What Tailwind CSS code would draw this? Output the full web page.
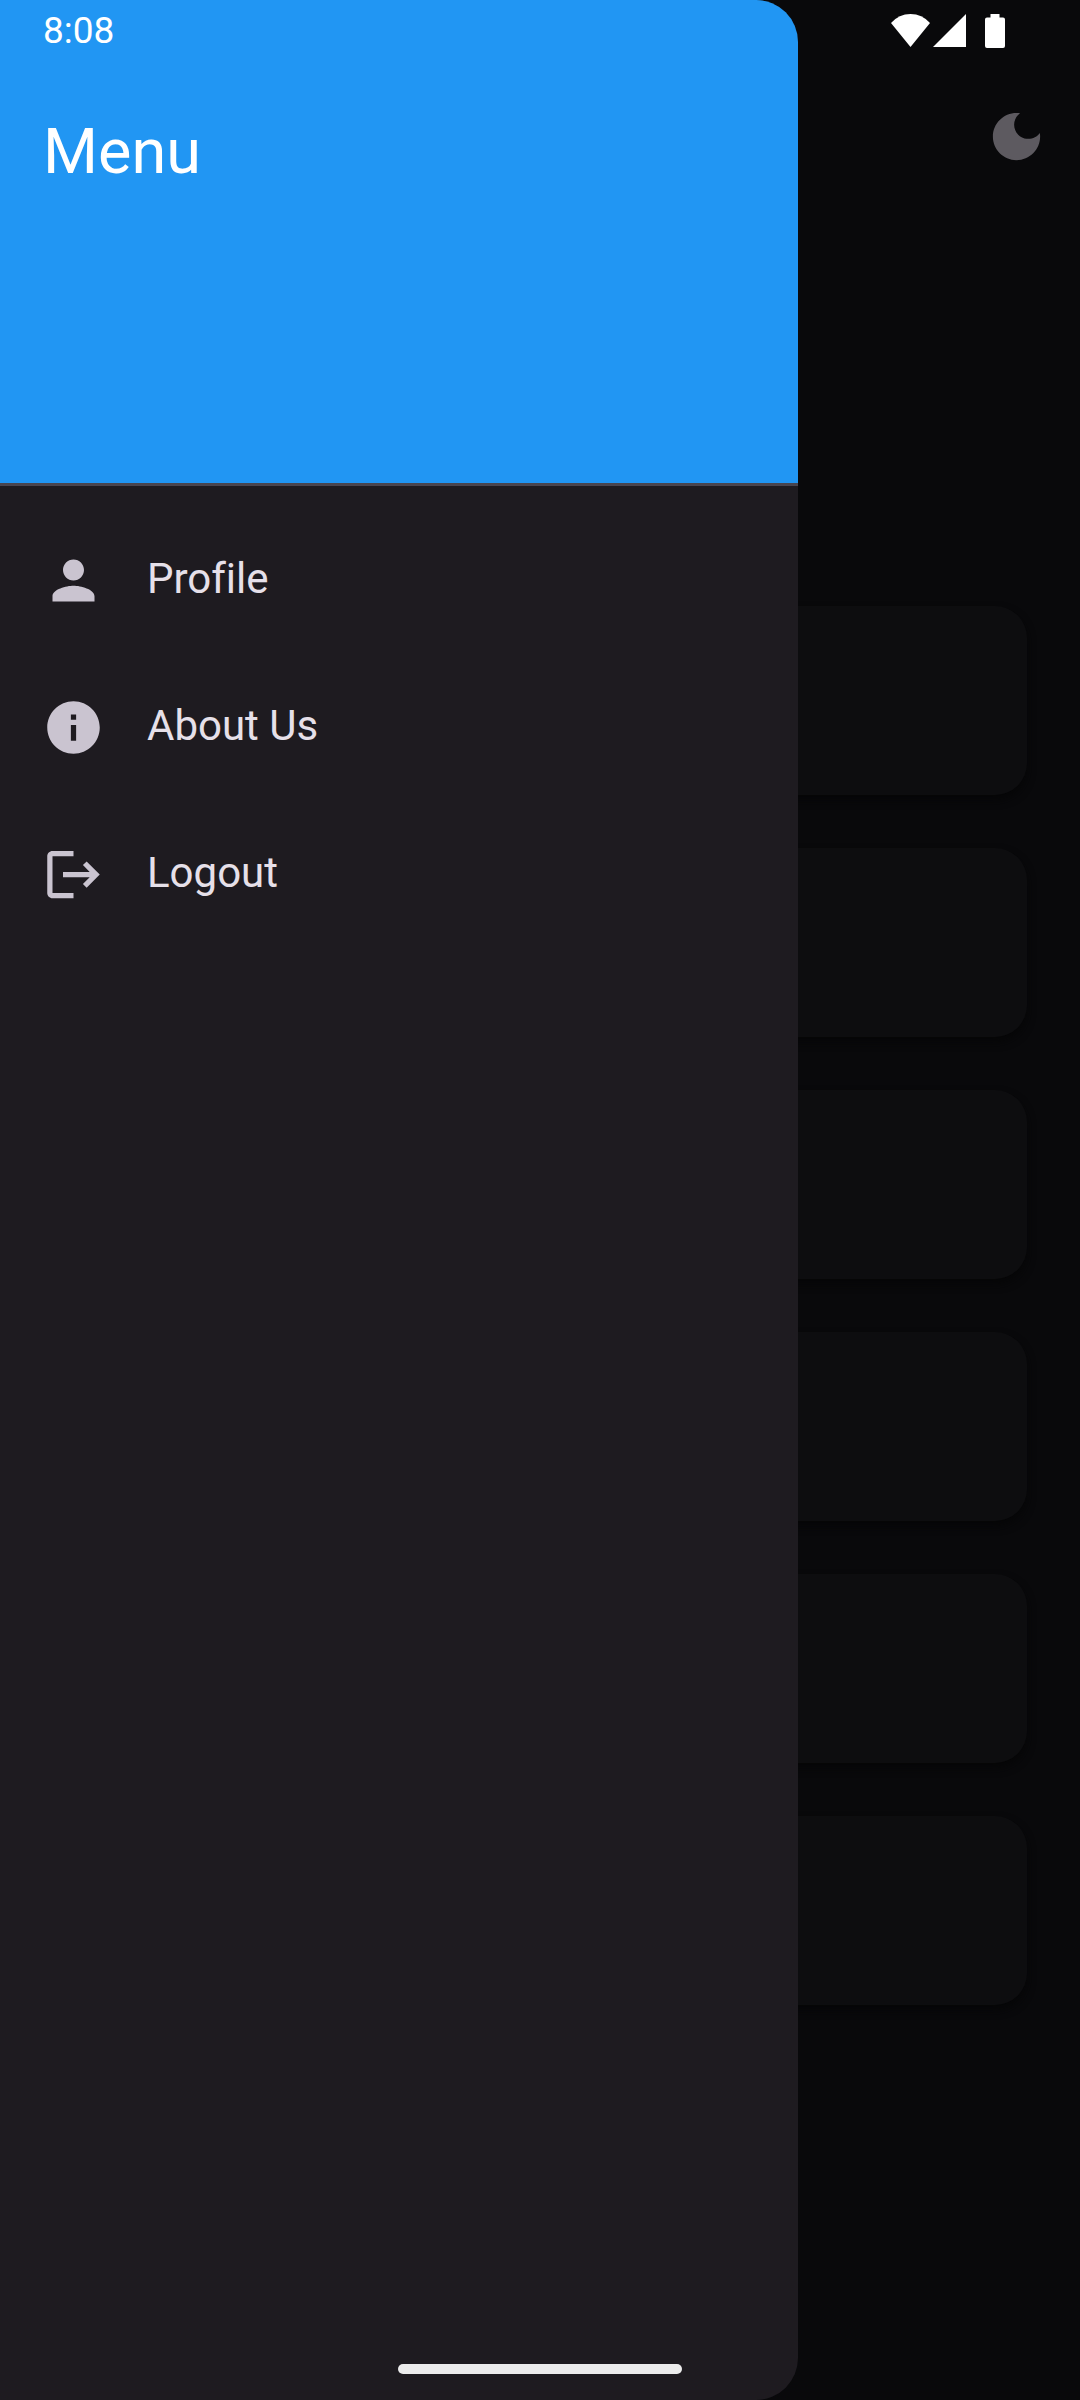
<!DOCTYPE html>
<html lang="en">
<head>
<meta charset="utf-8">
<meta name="viewport" content="width=device-width, initial-scale=1">
<title>Menu</title>
<script src="https://cdn.jsdelivr.net/npm/@tailwindcss/browser@4"></script>
</head>
<body class="bg-[#09090b] font-[Roboto,sans-serif]">
<div class="relative min-h-screen overflow-hidden">

  <!-- Page behind the drawer -->
  <main class="pt-[63px]">
    <div class="flex h-[147px] items-center justify-end px-8">
      <button type="button" aria-label="Dark mode" class="text-[#5d5a60]">
        <svg class="size-[63px]" viewBox="0 0 24 24" fill="currentColor"><path d="M12 3c-4.970 0-9 4.030-9 9s4.030 9 9 9 9-4.030 9-9c0-.46-.04-.92-.1-1.360-.98 1.370-2.580 2.260-4.400 2.260-2.980 0-5.400-2.420-5.400-5.400 0-1.810.89-3.420 2.260-4.400-.44-.06-.9-.1-1.360-.1z"/></svg>
      </button>
    </div>
    <div class="flex flex-col gap-[53px] px-[53px] pt-[396px]">
      <div class="h-[189px] rounded-[32px] bg-[#0d0d0f] shadow-[0_5px_8px_#060607]"></div>
      <div class="h-[189px] rounded-[32px] bg-[#0d0d0f] shadow-[0_5px_8px_#060607]"></div>
      <div class="h-[189px] rounded-[32px] bg-[#0d0d0f] shadow-[0_5px_8px_#060607]"></div>
      <div class="h-[189px] rounded-[32px] bg-[#0d0d0f] shadow-[0_5px_8px_#060607]"></div>
      <div class="h-[189px] rounded-[32px] bg-[#0d0d0f] shadow-[0_5px_8px_#060607]"></div>
      <div class="h-[189px] rounded-[32px] bg-[#0d0d0f] shadow-[0_5px_8px_#060607]"></div>
    </div>
  </main>

  <!-- Navigation drawer -->
  <aside class="absolute inset-y-0 left-0 w-[798px] max-w-full overflow-hidden rounded-r-[42px] bg-[#1e1b20]">
    <header class="h-[486px] border-b-3 border-[#49454f] bg-[#2196f3] px-[43px] pt-[105px]">
      <h1 class="text-[63px] leading-[94px] text-white">Menu</h1>
    </header>
    <nav class="flex flex-col py-[21px] text-[42px] leading-[63px] text-[#e6e0e9] [font-variant-ligatures:none]">
      <a href="#profile" class="flex h-[147px] items-center gap-[42px] px-[42px]">
        <svg class="size-[63px] shrink-0 text-[#cac4d0]" viewBox="0 0 24 24" fill="currentColor"><path d="M12 12c2.210 0 4-1.790 4-4s-1.790-4-4-4-4 1.790-4 4 1.790 4 4 4zm0 2c-2.670 0-8 1.340-8 4v2h16v-2c0-2.660-5.330-4-8-4z"/></svg>
        <span class="pb-1">Profile</span>
      </a>
      <a href="#about" class="flex h-[147px] items-center gap-[42px] px-[42px]">
        <svg class="size-[63px] shrink-0 text-[#cac4d0]" viewBox="0 0 24 24" fill="currentColor"><path d="M12 2C6.480 2 2 6.480 2 12s4.480 10 10 10 10-4.480 10-10S17.520 2 12 2zm1 15h-2v-6h2v6zm0-8h-2V7h2v2z"/></svg>
        <span class="pb-1">About Us</span>
      </a>
      <a href="#logout" class="flex h-[147px] items-center gap-[42px] px-[42px]">
        <svg class="size-[63px] shrink-0 text-[#cac4d0]" viewBox="0 0 24 24" fill="currentColor"><path d="M17 7l-1.410 1.410L18.170 11H8v2h10.170l-2.580 2.580L17 17l5-5zM4 5h8V3H4c-1.100 0-2 .9-2 2v14c0 1.100.9 2 2 2h8v-2H4V5z"/></svg>
        <span class="pb-1">Logout</span>
      </a>
    </nav>
  </aside>

  <!-- System status bar -->
  <div class="absolute inset-x-0 top-0 flex h-[62px] items-center justify-between pr-[75px] pl-[43px] text-white">
    <time class="text-[37px] leading-[62px]">8:08</time>
    <div class="flex items-center">
      <svg class="h-[34px] w-[39px]" viewBox="0 0 39 34" fill="currentColor"><path d="M0 9Q8 0 19.500 0T39 9L19.500 33Z"/></svg>
      <svg class="ml-[3px] h-[34px] w-[33px]" viewBox="0 0 33 34" fill="currentColor"><path d="M33 0V33H0Z"/></svg>
      <svg class="ml-[19px] h-[34px] w-[20px]" viewBox="0 0 20 34" fill="currentColor"><path d="M5.500 0h9v3.500H18a2 2 0 0 1 2 2V32a2 2 0 0 1-2 2H2a2 2 0 0 1-2-2V5.500a2 2 0 0 1 2-2h3.500z"/></svg>
    </div>
  </div>

  <!-- Gesture handle -->
  <div class="absolute inset-x-0 bottom-[26px] flex justify-center">
    <div class="h-[10px] w-[284px] rounded-full bg-[#ececec]"></div>
  </div>
</div>
</body>
</html>
